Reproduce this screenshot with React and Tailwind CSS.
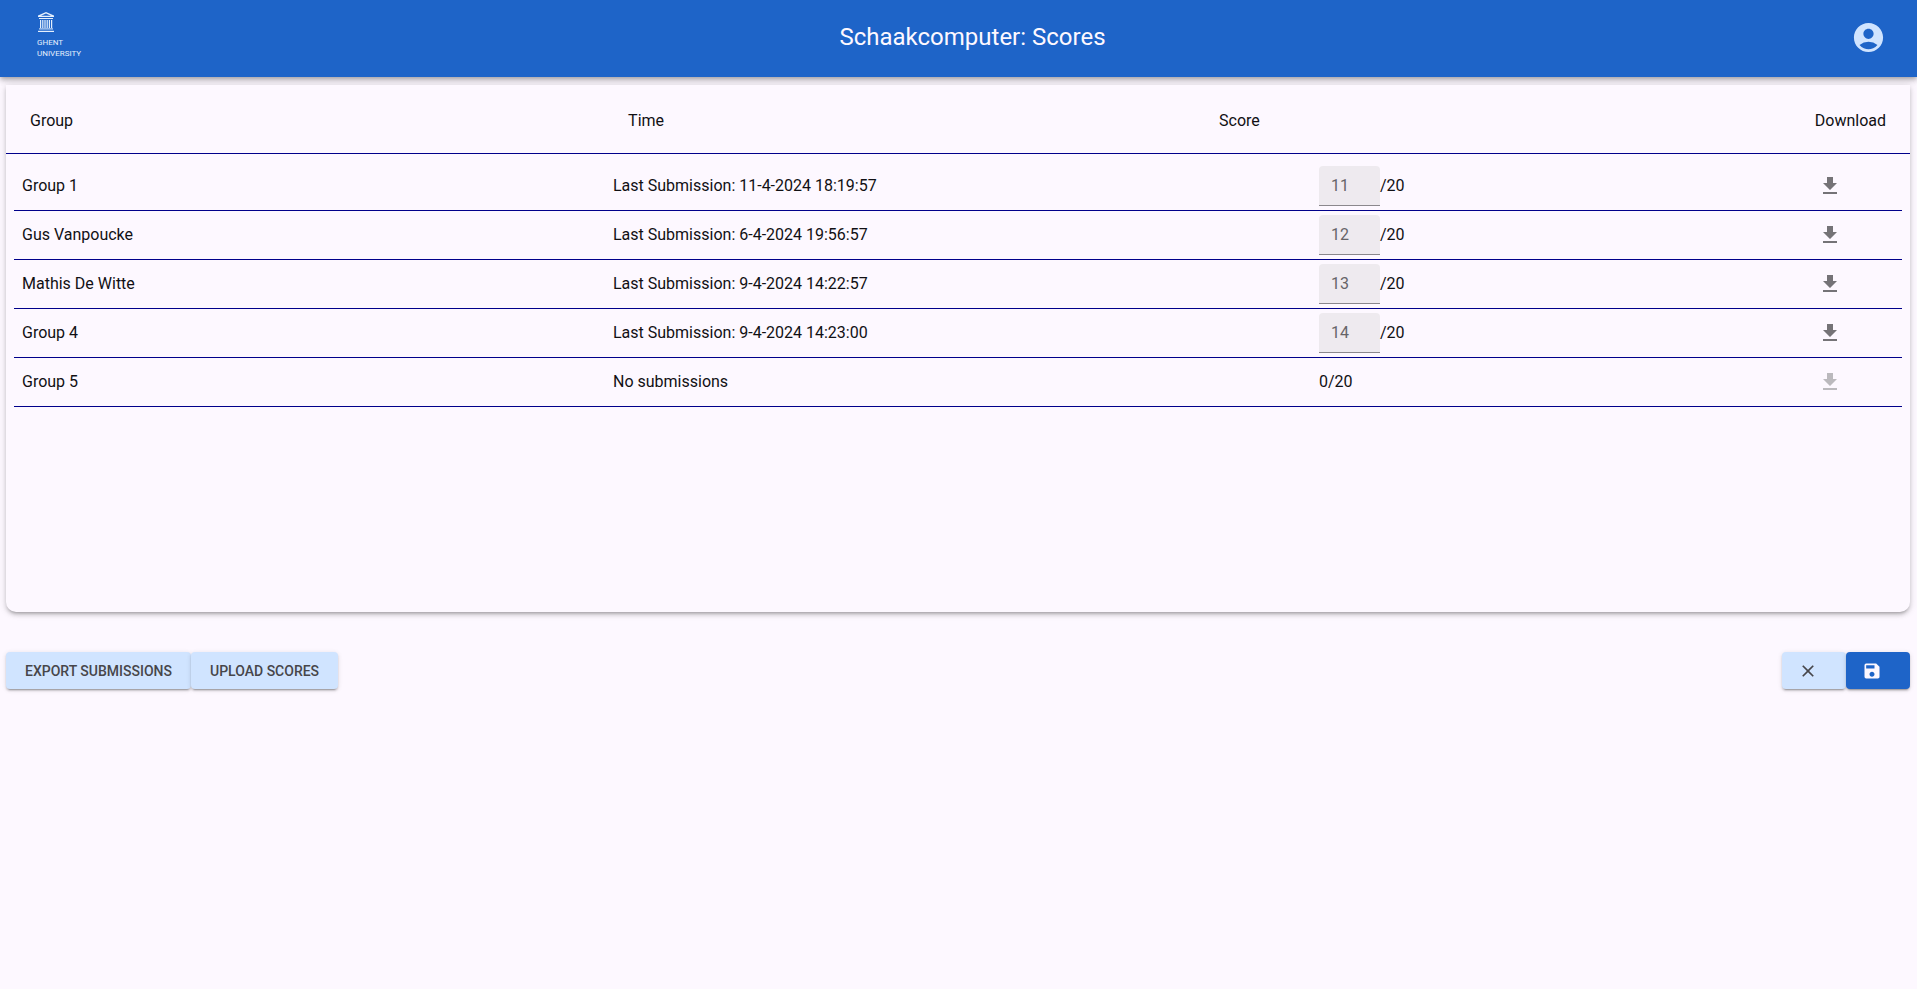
import { MdAccountCircle, MdClose, MdDownload, MdSave } from "react-icons/md";

const rows = [
  { group: "Group 1", time: "Last Submission: 11-4-2024 18:19:57", score: 11 },
  { group: "Gus Vanpoucke", time: "Last Submission: 6-4-2024 19:56:57", score: 12 },
  { group: "Mathis De Witte", time: "Last Submission: 9-4-2024 14:22:57", score: 13 },
  { group: "Group 4", time: "Last Submission: 9-4-2024 14:23:00", score: 14 },
  { group: "Group 5", time: "No submissions", score: null },
];

const raised =
  "shadow-[0_3px_1px_-2px_rgba(0,0,0,0.2),0_2px_2px_0_rgba(0,0,0,0.14),0_1px_5px_0_rgba(0,0,0,0.12)]";

function Logo() {
  return (
    <a href="#home" aria-label="Ghent University" className="flex w-[78px] pl-[13px] text-[#e4effd]">
      <svg width="52" height="51" viewBox="0 0 52 51" fill="currentColor" aria-hidden="true">
        <path d="M9 0 17 3.4V5H1V3.4Z M9 1.5 4 3.7H14Z" fillRule="evenodd" />
        <rect x="2" y="6" width="14" height="1" />
        <rect x="3" y="8" width="1.2" height="8" />
        <rect x="5.2" y="8" width="1.2" height="8" />
        <rect x="7.4" y="8" width="1.2" height="8" />
        <rect x="9.6" y="8" width="1.2" height="8" />
        <rect x="11.8" y="8" width="1.2" height="8" />
        <rect x="14" y="8" width="1.2" height="8" />
        <rect x="2" y="16.4" width="14" height="1" />
        <rect x="1" y="18.8" width="16" height="1.2" />
        <g fontFamily="Roboto, sans-serif" fontSize="8">
          <text x="0" y="33">GHENT</text>
          <text x="0" y="44">UNIVERSITY</text>
        </g>
      </svg>
    </a>
  );
}

function ScoreRow({ row }) {
  const empty = row.score === null;
  return (
    <tr className="grid h-[49px] grid-cols-[591fr_706fr_491fr_84px] items-center border-b border-[#00008b] px-2">
      <td>{row.group}</td>
      <td>{row.time}</td>
      <td className="flex items-center">
        {empty ? (
          <span>0/20</span>
        ) : (
          <>
            <input
              type="text"
              disabled
              defaultValue={row.score}
              aria-label={`Score for ${row.group}`}
              className="h-10 w-[61px] rounded-t border-b border-[#8a878c] bg-[#eeeaef] px-3 text-[#666468]"
            />
            <span>/20</span>
          </>
        )}
      </td>
      <td>
        <button
          type="button"
          disabled={empty}
          aria-label={`Download submission of ${row.group}`}
          className="block rounded-full p-2 text-[#757377] disabled:text-[#bbb9bd]"
        >
          <MdDownload size={24} />
        </button>
      </td>
    </tr>
  );
}

export default function App() {
  return (
    <div className="min-h-screen bg-[#fdf8ff] font-[Roboto,sans-serif] text-base text-[#111014]">
      <header className="flex items-center justify-between bg-[#1e64c8] pt-3 pr-[23px] pb-[14px] pl-6 shadow-[0_2px_4px_-1px_rgba(0,0,0,0.2),0_4px_5px_0_rgba(0,0,0,0.14),0_1px_10px_0_rgba(0,0,0,0.12)]">
        <Logo />
        <h1 className="pb-[2px] text-2xl text-[#fdf8ff]">Schaakcomputer: Scores</h1>
        <button type="button" aria-label="Account" className="rounded-full p-2 text-[#d0e4ff]">
          <MdAccountCircle size={35} />
        </button>
      </header>

      <main className="pt-2 pr-[7px] pl-[6px]">
        <section className="relative min-h-[527px] rounded-b-[10px] bg-[#fdf8ff] shadow-[0_3px_3px_-2px_rgba(0,0,0,0.2),0_3px_4px_0_rgba(0,0,0,0.14),0_1px_8px_0_rgba(0,0,0,0.12)]">
          <table className="block">
            <thead className="block">
              <tr className="flex h-[69px] items-center justify-between border-b border-[#00008b] px-6 pt-1">
                <th className="font-normal">Group</th>
                <th className="font-normal">Time</th>
                <th className="font-normal">Score</th>
                <th className="font-normal">Download</th>
              </tr>
            </thead>
            <tbody className="block p-2">
              {rows.map((row) => (
                <ScoreRow key={row.group} row={row} />
              ))}
            </tbody>
          </table>
        </section>

        <div className="mt-10 flex justify-between text-sm font-medium">
          <div className="flex">
            <button type="button" className={`h-[37px] rounded bg-[#d0e4ff] px-[19px] text-[#47464a] ${raised}`}>
              EXPORT SUBMISSIONS
            </button>
            <button type="button" className={`h-[37px] rounded bg-[#d0e4ff] px-[19px] text-[#47464a] ${raised}`}>
              UPLOAD SCORES
            </button>
          </div>
          <div className="flex">
            <button
              type="button"
              aria-label="Cancel"
              className={`flex h-[37px] w-16 items-center rounded bg-[#d0e4ff] pl-4 text-[#47464a] ${raised}`}
            >
              <MdClose size={20} />
            </button>
            <button
              type="button"
              aria-label="Save"
              className={`flex h-[37px] w-16 items-center rounded bg-[#1e64c8] pl-4 text-[#fdf8ff] ${raised}`}
            >
              <MdSave size={20} />
            </button>
          </div>
        </div>
      </main>
    </div>
  );
}
